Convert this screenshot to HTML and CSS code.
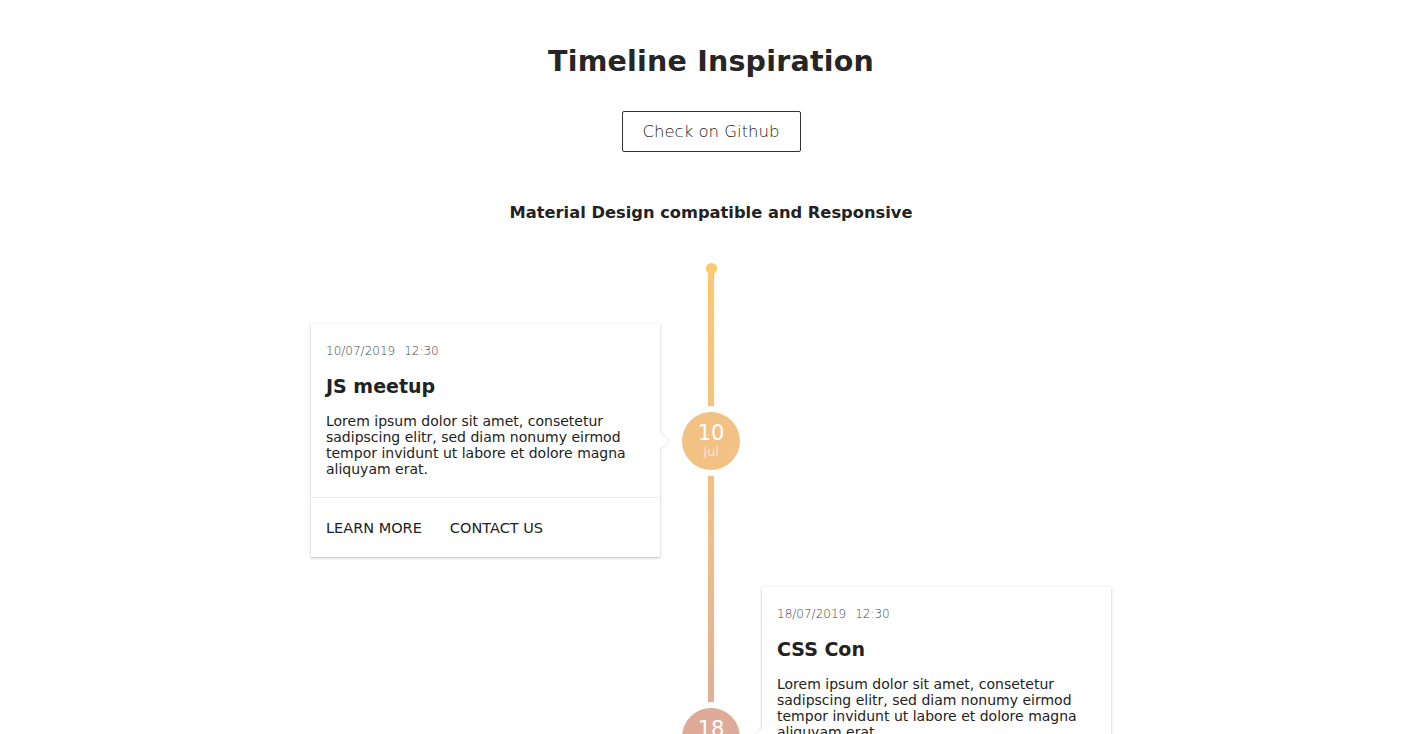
FILE: index.html
```html
<!DOCTYPE html>
<html lang="en">
<head>
<meta charset="utf-8">
<title>Timeline Inspiration</title>
<link rel="stylesheet" href="styles.css">
</head>
<body>
<div class="page">
  <header class="header">
    <h1 class="title">Timeline Inspiration</h1>
    <a class="gh-btn" href="#">Check on Github</a>
    <h2 class="subtitle">Material Design compatible and Responsive</h2>
  </header>

  <section class="timeline">
    <div class="tl-start"></div>

    <div class="tl-item left">
      <article class="card">
        <div class="card-body">
          <div class="card-date"><span>10/07/2019</span><span>12:30</span></div>
          <h3 class="card-title">JS meetup</h3>
          <p class="card-text">Lorem ipsum dolor sit amet, consetetur sadipscing elitr, sed diam nonumy eirmod tempor invidunt ut labore et dolore magna aliquyam erat.</p>
        </div>
        <div class="card-actions">
          <a href="#">LEARN MORE</a>
          <a href="#">CONTACT US</a>
        </div>
      </article>
      <div class="tl-node c1"><span class="day">10</span><span class="mon">Jul</span></div>
      <div class="tl-empty"></div>
    </div>

    <div class="tl-item right">
      <div class="tl-empty"></div>
      <div class="tl-node c2"><span class="day">18</span><span class="mon">Jul</span></div>
      <article class="card">
        <div class="card-body">
          <div class="card-date"><span>18/07/2019</span><span>12:30</span></div>
          <h3 class="card-title">CSS Con</h3>
          <p class="card-text">Lorem ipsum dolor sit amet, consetetur sadipscing elitr, sed diam nonumy eirmod tempor invidunt ut labore et dolore magna aliquyam erat.</p>
          <p class="card-text extra">At vero eos et accusam et justo duo dolores et ea rebum. Stet clita kasd gubergren, no sea takimata sanctus est.</p>
        </div>
        <div class="card-actions">
          <a href="#">LEARN MORE</a>
          <a href="#">CONTACT US</a>
        </div>
      </article>
    </div>
  </section>
</div>
</body>
</html>
```

FILE: styles.css
```css
* { box-sizing: border-box; }

html, body {
  margin: 0;
  padding: 0;
  background: #fff;
}

body {
  font-family: "DejaVu Sans", "Noto Sans", sans-serif;
  color: #222;
}

.page {
  padding-left: 15px;
  overflow: hidden;
}

.header {
  display: flex;
  flex-direction: column;
  align-items: center;
}

.title {
  margin: 42px 0 0;
  font-size: 28.5px;
  line-height: 40px;
  font-weight: 600;
  color: #262626;
  letter-spacing: 0.2px;
}

.gh-btn {
  margin-top: 29px;
  width: 179px;
  height: 41px;
  display: flex;
  align-items: center;
  justify-content: center;
  border: 1px solid #333;
  border-radius: 2px;
  color: #222;
  text-decoration: none;
  font-size: 16.5px;
  font-weight: 300;
}

.subtitle {
  margin: 49px 0 0;
  font-size: 16.3px;
  line-height: 24px;
  font-weight: 600;
  color: #222;
}

.timeline {
  position: relative;
  width: 800px;
  margin: 38px auto 0;
  padding-bottom: 40px;
}

.timeline::before {
  content: "";
  position: absolute;
  left: 397px;
  top: 5px;
  bottom: 0;
  width: 6px;
  background: linear-gradient(to bottom, #ffc86d 0px, #f6c27a 150px, #efbb8b 300px, #e0ae94 440px, #d9a99a 700px);
}

.tl-start {
  position: relative;
  width: 11px;
  height: 11px;
  border-radius: 50%;
  background: #ffc86d;
  margin: 0 auto;
}

.tl-item {
  display: grid;
  grid-template-columns: 349px 58px 349px;
  column-gap: 22px;
  align-items: center;
  position: relative;
}

.tl-item.left { margin-top: 50px; }
.tl-item.right { margin-top: 30px; }

.tl-node {
  position: relative;
  width: 58px;
  height: 58px;
  border-radius: 50%;
  display: flex;
  flex-direction: column;
  align-items: center;
  justify-content: center;
  color: #fff;
  box-shadow: 0 0 0 6px #fff;
}

.tl-node.c1 { background: #f1c284; }
.tl-node.c2 { background: #ddab98; }

.tl-node .day {
  font-size: 21px;
  line-height: 22px;
  font-weight: 500;
  margin-top: 1px;
}

.tl-node .mon {
  font-size: 13px;
  line-height: 16px;
  font-weight: 300;
}

.card {
  position: relative;
  background: #fff;
  box-shadow: 0 1px 3px rgba(0,0,0,0.22), 0 1px 1px rgba(0,0,0,0.06);
}

.card::after {
  content: "";
  position: absolute;
  top: 50%;
  width: 12px;
  height: 12px;
  background: #fff;
  transform: translateY(-50%) rotate(45deg);
  box-shadow: 1px -1px 2px rgba(0,0,0,0.08);
}

.left .card::after { right: -6px; }
.right .card::after { left: -6px; box-shadow: -1px 1px 2px rgba(0,0,0,0.08); }

.card-body {
  padding: 19px 15px 20px;
  border-bottom: 1px solid #eee;
}

.card-date {
  display: flex;
  gap: 9px;
  font-size: 12px;
  line-height: 16px;
  color: #444;
  font-weight: 300;
}

.card-title {
  margin: 15px 0 0;
  font-size: 19px;
  line-height: 24px;
  font-weight: 600;
  color: #222;
}

.card-text {
  margin: 15px 0 0;
  font-size: 14px;
  line-height: 16px;
  color: #222;
}

.card-text.extra { margin-top: 18px; }

.card-actions {
  height: 59px;
  padding: 0 15px;
  display: flex;
  align-items: center;
  gap: 28px;
}

.card-actions a {
  font-size: 14.5px;
  color: #222;
  text-decoration: none;
  font-weight: 400;
}
```
